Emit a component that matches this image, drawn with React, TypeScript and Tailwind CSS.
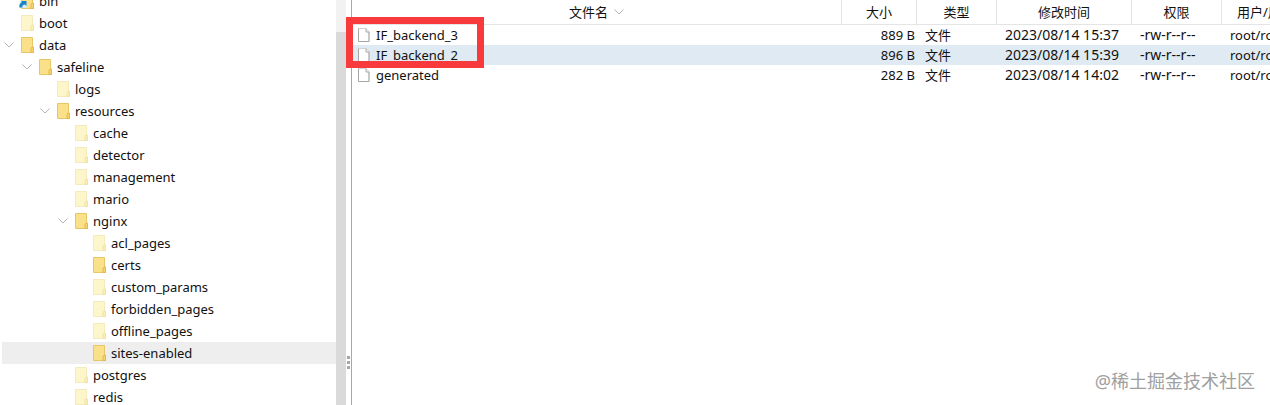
import clsx from 'clsx'

type Node = { name: string; depth: number; open?: boolean; full?: boolean; link?: boolean }

const nodes: Node[] = [
  { name: 'bin', depth: 0, full: true, link: true },
  { name: 'boot', depth: 0 },
  { name: 'data', depth: 0, full: true, open: true },
  { name: 'safeline', depth: 1, full: true, open: true },
  { name: 'logs', depth: 2 },
  { name: 'resources', depth: 2, full: true, open: true },
  { name: 'cache', depth: 3 },
  { name: 'detector', depth: 3 },
  { name: 'management', depth: 3 },
  { name: 'mario', depth: 3 },
  { name: 'nginx', depth: 3, full: true, open: true },
  { name: 'acl_pages', depth: 4 },
  { name: 'certs', depth: 4, full: true },
  { name: 'custom_params', depth: 4 },
  { name: 'forbidden_pages', depth: 4 },
  { name: 'offline_pages', depth: 4 },
  { name: 'sites-enabled', depth: 4, full: true },
  { name: 'postgres', depth: 3 },
  { name: 'redis', depth: 3 },
]

const files = [
  { name: 'IF_backend_3', size: '889 B', time: '2023/08/14 15:37' },
  { name: 'IF_backend_2', size: '896 B', time: '2023/08/14 15:39' },
  { name: 'generated', size: '282 B', time: '2023/08/14 14:02' },
]

const indent = ['pl-0', 'pl-[18px]', 'pl-9', 'pl-[54px]', 'pl-[72px]']

function Chevron() {
  return (
    <svg width="10" height="6" viewBox="0 0 10 6" fill="none" stroke="#b4b4b4" className="shrink-0">
      <path d="M.5 .5 5 5 9.5 .5" />
    </svg>
  )
}

function Folder({ full, link }: { full?: boolean; link?: boolean }) {
  return (
    <svg width="14" height="16" viewBox="0 0 14 16" className="shrink-0 overflow-visible">
      <path
        d="M.5 .5h11v9.500l1 1v4.500H.5z"
        fill={full ? '#fbe08a' : '#fdf6cb'}
        stroke={full ? '#e6c768' : '#f4ebbd'}
      />
      <path d="M10 15.500v-4l1-1.500h1.500v5.500z" fill={full ? '#f8d56c' : '#fbf0b4'} stroke={full ? '#e0b94c' : '#f0e3a4'} />
      {link && (
        <>
          <path d="M-1.500 8h7v7h-7z" fill="#d9eefa" />
          <path d="M-1.500 14.500c-.5-3.500 1-5 3-5H.5V8h5v5L4 11.500c-2 0-3 1-2.500 3z" fill="#1684c7" />
        </>
      )}
    </svg>
  )
}

function FileIcon() {
  return (
    <svg width="12" height="14" viewBox="0 0 12 14" fill="none" className="shrink-0">
      <path d="M.5 .5h7.500l3 3v10H.5z" fill="#fff" stroke="#d4d4d4" />
      <path d="M.5 .5v13h10.500V4H8V.5" stroke="#a6a6a6" />
    </svg>
  )
}

function Tree() {
  return (
    <nav className="w-[336px] shrink-0 overflow-hidden pl-0.5">
      <ul className="-mt-2.5">
        {nodes.map((n) => (
          <li key={n.name}>
            <button
              type="button"
              className={clsx('flex h-[22px] w-full items-center', indent[n.depth], n.name === 'sites-enabled' && 'bg-[#eeeeee]')}
            >
              <span className="flex w-[19px] shrink-0 pl-0.5">{n.open && <Chevron />}</span>
              <Folder full={n.full} link={n.link} />
              <span className="pl-1">{n.name}</span>
            </button>
          </li>
        ))}
      </ul>
    </nav>
  )
}

function Files() {
  const th = 'overflow-hidden border-r border-b border-[#e5e5e5] p-0 font-normal'
  return (
    <main className="relative min-w-0 flex-1 border-l border-[#a8a8a8]">
      <table className="w-full table-fixed border-separate border-spacing-0 whitespace-nowrap">
        <thead>
          <tr className="h-[25px]">
            <th className={th}>
              <span className="flex items-center justify-center gap-1.5">
                文件名
                <Chevron />
              </span>
            </th>
            <th className={clsx(th, 'w-[75px]')}>大小</th>
            <th className={clsx(th, 'w-20')}>类型</th>
            <th className={clsx(th, 'w-[135px]')}>修改时间</th>
            <th className={clsx(th, 'w-[90px]')}>权限</th>
            <th className="w-12 overflow-hidden border-b border-[#e5e5e5] p-0 pl-[15px] text-left font-normal">用户/用户组</th>
          </tr>
        </thead>
        <tbody>
          {files.map((f, i) => (
            <tr key={f.name} className={clsx('h-5', i === 1 && 'bg-[#dfeaf2]')}>
              <td className="p-0 pl-1.5">
                <span className="flex items-center gap-1.5">
                  <FileIcon />
                  {f.name}
                </span>
              </td>
              <td className="p-0 pr-0.5 text-right">{f.size}</td>
              <td className="p-0 pl-2">文件</td>
              <td className="p-0 pl-2 text-[14px] leading-5">{f.time}</td>
              <td className="p-0 pl-2 text-[14px] leading-5">-rw-r--r--</td>
              <td className="overflow-hidden p-0 pl-2">root/root</td>
            </tr>
          ))}
        </tbody>
      </table>
      <div className="pointer-events-none absolute top-[17px] -left-1.5 h-[51px] w-[138px] border-7 border-[#f93a3c]" />
      <p className="absolute right-[15px] bottom-3 text-[18px] leading-6 text-[#a0a0a0]">@稀土掘金技术社区</p>
    </main>
  )
}

export default function App() {
  return (
    <div className="flex h-screen overflow-hidden bg-white font-['Noto_Sans','Noto_Sans_CJK_SC',sans-serif] text-[13px] leading-5 text-[#111111]">
      <Tree />
      <div className="w-2.5 shrink-0 bg-[#f2f2f2] pt-8">
        <div className="h-full bg-[#dadada]" />
      </div>
      <div className="flex w-[5px] shrink-0 flex-col items-center justify-end gap-0.5 pb-9">
        <i className="size-[3px] bg-[#a6a6a6]" />
        <i className="size-[3px] bg-[#a6a6a6]" />
        <i className="size-[3px] bg-[#a6a6a6]" />
      </div>
      <Files />
    </div>
  )
}
